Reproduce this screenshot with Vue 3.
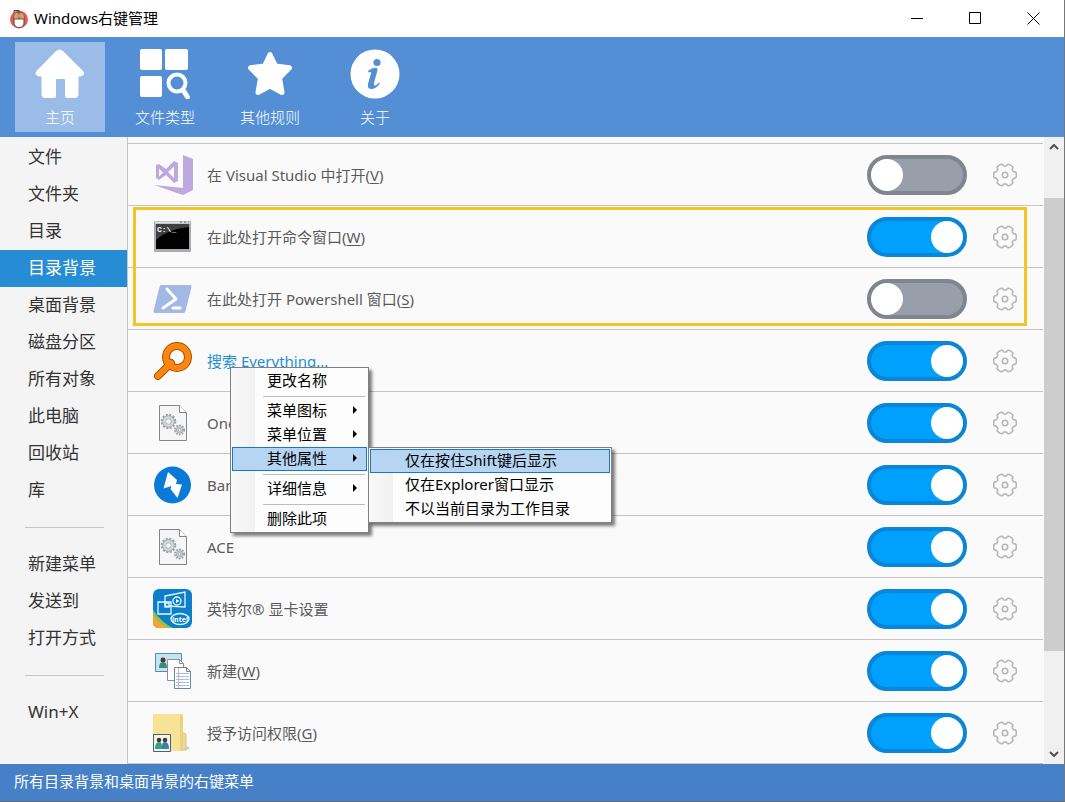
<template>
  <div class="window">
    <header class="title-bar">
      <svg class="app-logo" viewBox="0 0 20 20" width="20" height="20">
        <circle cx="10" cy="10.500" r="9" fill="#ea5a50" />
        <path d="M5 4V1.500h5V4" fill="none" stroke="#444" stroke-width="1" />
        <rect x="5" y="3.500" width="10" height="15" rx="4.500" fill="#fff" stroke="#45484c" stroke-width="1" />
        <path d="M5.500 10V7q0-3 3-3h3q3 0 3 3v3z" fill="#e8a35c" />
        <path d="M5 10h10M10 3.500V10" stroke="#4b6356" stroke-width="1" />
        <rect x="9" y="5" width="2" height="3.500" rx="1" fill="#f7e27a" stroke="#555" stroke-width=".6" />
      </svg>
      <h1 class="title">Windows右键管理</h1>
      <div class="window-buttons">
        <button class="window-btn" aria-label="最小化">
          <svg viewBox="0 0 13 13" width="13" height="13"><path d="M0 6.500h12" /></svg>
        </button>
        <button class="window-btn" aria-label="最大化">
          <svg viewBox="0 0 13 13" width="13" height="13"><path d="M.5.5h11v11H.5z" /></svg>
        </button>
        <button class="window-btn" aria-label="关闭">
          <svg viewBox="0 0 13 13" width="13" height="13"><path d="M.5.5l12 12M12.500.5l-12 12" /></svg>
        </button>
      </div>
    </header>

    <nav class="toolbar">
      <button
        v-for="tab in tabs"
        :key="tab.name"
        class="tab"
        :class="{ active: tab.name === activeTab }"
        @click="activeTab = tab.name"
      >
        <svg class="tab-icon" viewBox="0 0 50 50" width="50" height="50" fill="#fff">
          <path
            v-if="tab.name === 'home'"
            d="M21 2q3.500-3 7 0l20 20q2 2.500 0 4.500-1 1-4.500 1V45q0 4-4 4h-7.500q-2 0-2-2V31q0-1-1-1h-7q-1 0-1 1v16q0 2-2 2h-8.500q-4 0-4-4V27.500q-4 0-5-1-2-2 0-4.500z"
          />
          <template v-else-if="tab.name === 'type'">
            <rect x="0" y="0" width="22" height="21" rx="2" />
            <rect x="25" y="0" width="23" height="21" rx="2" />
            <rect x="0" y="27" width="22" height="21" rx="2" />
            <circle cx="37" cy="34" r="8.500" fill="none" stroke="#fff" stroke-width="4" />
            <path d="M43 41l4.500 7" stroke="#fff" stroke-width="5" stroke-linecap="round" />
          </template>
          <path
            v-else-if="tab.name === 'rule'"
            d="M25 5.500l5.500 11.500 14 1.800L34.500 29l2.500 14.500L25 37l-12 6.500L15.500 29 5.500 18.800l14-1.800z"
            stroke="#fff"
            stroke-width="5"
            stroke-linejoin="round"
          />
          <template v-else>
            <circle cx="25" cy="25" r="24.500" />
            <circle cx="27" cy="13.500" r="3.600" fill="#548fd6" />
            <path
              d="M18 22q5-4 9-3 1 1 0 4l-3 11q-.5 3 1 2.500 2-.5 4-3l1 1q-4 5-8 5.500-5 .5-4-5l3-10.500q.5-2-1-1.500l-1.500.5z"
              fill="#548fd6"
            />
          </template>
        </svg>
        <span>{{ tab.label }}</span>
      </button>
    </nav>

    <div class="body">
      <aside class="sidebar">
        <template v-for="(group, index) in groups" :key="index">
          <hr v-if="index > 0" class="divider" />
          <button
            v-for="item in group"
            :key="item"
            class="side-item"
            :class="{ active: item === activeItem }"
            @click="activeItem = item"
          >
            {{ item }}
          </button>
        </template>
      </aside>

      <main class="content">
        <ul class="list">
          <li v-for="row in rows" :key="row.id" class="row">
            <svg class="row-icon" viewBox="0 0 40 40" width="40" height="40">
              <g v-if="row.icon === 'vs'" fill="#bda9df">
                <path d="M30 0l10 4v31l-10 5L1 30l29 3z" />
                <path
                  fill-rule="evenodd"
                  d="M3 10l3-1 7 5 8-8 4 2v18l-4 2-8-8-7 5-3-2zM6 13.500v8l4-4zM21 11.500l-6 5.500 6 6z"
                />
              </g>
              <g v-else-if="row.icon === 'cmd'">
                <rect x="1" y="4" width="37" height="31" rx="1" fill="#a9acaf" />
                <path d="M2 5.500h35" stroke="#dfe2e5" stroke-width="2" />
                <path d="M27 5h2M31 5h2M35 5h1" stroke="#55595c" stroke-width="1" />
                <rect x="3" y="7" width="33" height="25" fill="#000" />
                <path d="M3 7h33v3Q14 12 3 23z" fill="#3d3f41" />
                <text x="4" y="15" class="cmd-text">C:\_</text>
              </g>
              <g v-else-if="row.icon === 'ps'">
                <path d="M8 6h29q2 0 1.500 2l-6 24q-.5 2-2 2H2q-2 0-1.500-2l6-24Q7 6 8 6z" fill="#a2b9e6" />
                <path d="M14 10l9 10L10 29M20 29h7" class="ps-mark" />
              </g>
              <g v-else-if="row.icon === 'search'">
                <path d="M18 22L5 35" stroke="#a35113" stroke-width="8" stroke-linecap="round" />
                <circle cx="24" cy="16" r="11" fill="none" stroke="#a35113" stroke-width="8" />
                <path d="M18 22L5 35" stroke="#ff850b" stroke-width="6" stroke-linecap="round" />
                <circle cx="24" cy="16" r="11" fill="none" stroke="#ff850b" stroke-width="6" />
              </g>
              <g v-else-if="row.icon === 'file'" fill="none">
                <path d="M6.500 2.500h20l7 7v28h-27z" fill="#f6f6f6" stroke="#858585" />
                <path d="M26.500 2.500v7h7" fill="#fff" stroke="#858585" />
                <circle cx="15.500" cy="18.500" r="6.500" stroke="#9ba1a5" stroke-width="2.500" stroke-dasharray="2 1.400" />
                <circle cx="15.500" cy="18.500" r="4.500" stroke="#d3d8db" stroke-width="3" />
                <circle cx="15.500" cy="18.500" r="5.800" stroke="#9aa0a4" stroke-width=".8" />
                <circle cx="15.500" cy="18.500" r="2.800" fill="#f6f6f6" stroke="#9aa0a4" stroke-width=".8" />
                <circle cx="26.500" cy="27" r="4.500" stroke="#9ba1a5" stroke-width="2" stroke-dasharray="1.700 1.200" />
                <circle cx="26.500" cy="27" r="3.200" fill="#d3d8db" stroke="#9aa0a4" stroke-width=".8" />
                <circle cx="26.500" cy="27" r="1.500" fill="#f6f6f6" stroke="#9aa0a4" stroke-width=".8" />
              </g>
              <g v-else-if="row.icon === 'bandizip'">
                <circle cx="19.500" cy="20" r="18.500" fill="#0a7ad8" />
                <path d="M15 7l9 8-1 4 6 .5-4.500 13.500-7-9 1-3-8 2.500z" fill="#fff" />
              </g>
              <g v-else-if="row.icon === 'intel'">
                <rect x="0" y="0" width="39" height="39" rx="6" fill="#0b7fc9" />
                <path d="M0 21q8 12 20 18H6q-6 0-6-6z" fill="#8fc24a" />
                <path d="M0 26q7 9 15 13H6q-6 0-6-6z" fill="#f0a43a" />
                <g fill="none" stroke="#e9f7ff" stroke-width="1.300">
                  <path d="M12 7l20-4v15l-20-1zM5 13h13v12H5z" />
                  <circle cx="24" cy="12" r="4" />
                  <path d="M12 14h4v4h-4z" />
                  <ellipse cx="27" cy="30" rx="9" ry="5.500" />
                </g>
                <path d="M23 10l3.500 2-3.500 2z" fill="#fff" />
                <text x="27" y="33" class="intel-text">intel</text>
              </g>
              <g v-else-if="row.icon === 'new'">
                <path d="M2.500 2.500h26v18h-26z" fill="#c4e3f5" stroke="#5f87a8" />
                <circle cx="10" cy="9" r="2.500" fill="#4d3a2a" />
                <path d="M6 17q0-6 4-6t4 6z" fill="#3b8a72" />
                <path d="M14.500 8.500h12l4 4v17h-16z" fill="#fdfdfe" stroke="#8a8f98" />
                <path d="M26.500 8.500v4h4" fill="none" stroke="#8a8f98" />
                <path d="M21.500 16.500h12l4 4v17h-16z" fill="#fff" stroke="#71849a" />
                <path d="M33.500 16.500v4h4" fill="none" stroke="#71849a" />
                <path d="M23 22.500h13M23 25.500h13M23 28.500h13M23 31.500h13M23 34.500h13" stroke="#9cc3ea" />
                <path d="M25.500 17v20" stroke="#e8a5b5" />
              </g>
              <g v-else>
                <path d="M28 20h3q2 0 2 2v12l3 1-3 2h-8z" fill="#efd98a" stroke="#d8bf6c" stroke-width=".8" />
                <path d="M32 32l4 3-5 3z" fill="#c9cdd2" />
                <path d="M0 1h28q2 0 2 2v35H0z" fill="#f7e398" />
                <path d="M27 1h1q2 0 2 2v35h-3z" fill="#ecd27a" />
                <path d="M.5 21.500h17v17H.5z" fill="#eef6f2" stroke="#555f5b" />
                <circle cx="6" cy="27" r="2.300" fill="#4a3727" />
                <circle cx="12" cy="27" r="2.300" fill="#4a3727" />
                <path d="M2 36q0-7 4-7 3 0 3 4v3z" fill="#3f9b86" />
                <path d="M9 36v-3q0-4 3-4 4 0 4 7z" fill="#3a7fae" />
              </g>
            </svg>
            <label class="row-text" :class="{ hot: row.icon === 'search' }" :for="'switch-' + row.id">
              {{ row.text }}<template v-if="row.key">(<u>{{ row.key }}</u>)</template>
            </label>
            <input :id="'switch-' + row.id" v-model="row.on" class="switch" type="checkbox" />
            <button class="gear-btn" aria-label="设置">
              <svg viewBox="0 0 24 24" width="24" height="24" fill="none" stroke="#b7b7b7" stroke-width="1.600">
                <path :d="gearPath" />
                <circle cx="12" cy="12" r="2.700" />
              </svg>
            </button>
          </li>
        </ul>

        <div class="highlight-frame"></div>

        <div class="menu context-menu" role="menu">
          <template v-for="(item, index) in menuItems" :key="index">
            <hr v-if="!item" class="menu-divider" />
            <button v-else class="menu-item" :class="{ active: item.active }" role="menuitem">
              <span>{{ item.text }}</span>
              <svg v-if="item.sub" viewBox="0 0 4 8" width="4" height="8"><path d="M0 0l4 4-4 4z" /></svg>
            </button>
          </template>
        </div>

        <div class="menu sub-menu" role="menu">
          <button
            v-for="(text, index) in subItems"
            :key="text"
            class="menu-item"
            :class="{ active: index === 0 }"
            role="menuitem"
          >
            {{ text }}
          </button>
        </div>
      </main>

      <div class="scrollbar">
        <button class="scroll-btn" aria-label="向上">
          <svg viewBox="0 0 10 6" width="10" height="6"><path d="M1 5l4-4 4 4" /></svg>
        </button>
        <div class="track">
          <div class="thumb"></div>
        </div>
        <button class="scroll-btn" aria-label="向下">
          <svg viewBox="0 0 10 6" width="10" height="6"><path d="M1 1l4 4 4-4" /></svg>
        </button>
      </div>
    </div>

    <footer class="status-bar">所有目录背景和桌面背景的右键菜单</footer>
  </div>
</template>

<script setup>
import { ref } from 'vue'

const tabs = [
  { name: 'home', label: '主页' },
  { name: 'type', label: '文件类型' },
  { name: 'rule', label: '其他规则' },
  { name: 'about', label: '关于' }
]
const activeTab = ref('home')

const groups = [
  ['文件', '文件夹', '目录', '目录背景', '桌面背景', '磁盘分区', '所有对象', '此电脑', '回收站', '库'],
  ['新建菜单', '发送到', '打开方式'],
  ['Win+X']
]
const activeItem = ref('目录背景')

const rows = ref([
  { id: 1, icon: 'vs', text: '在 Visual Studio 中打开', key: 'V', on: false },
  { id: 2, icon: 'cmd', text: '在此处打开命令窗口', key: 'W', on: true },
  { id: 3, icon: 'ps', text: '在此处打开 Powershell 窗口', key: 'S', on: false },
  { id: 4, icon: 'search', text: '搜索 Everything...', on: true },
  { id: 5, icon: 'file', text: 'OneDrive', on: true },
  { id: 6, icon: 'bandizip', text: 'Bandizip', on: true },
  { id: 7, icon: 'file', text: 'ACE', on: true },
  { id: 8, icon: 'intel', text: '英特尔® 显卡设置', on: true },
  { id: 9, icon: 'new', text: '新建', key: 'W', on: true },
  { id: 10, icon: 'share', text: '授予访问权限', key: 'G', on: true }
])

// null 表示分隔线
const menuItems = [
  { text: '更改名称' },
  null,
  { text: '菜单图标', sub: true },
  { text: '菜单位置', sub: true },
  { text: '其他属性', sub: true, active: true },
  null,
  { text: '详细信息', sub: true },
  null,
  { text: '删除此项' }
]

const subItems = ['仅在按住Shift键后显示', '仅在Explorer窗口显示', '不以当前目录为工作目录']

// 六齿圆角齿轮
const buildGear = () => {
  const points = []
  for (let a = 0; a < 360; a += 60) {
    for (const [r, offset] of [[11.8, -16], [11.8, 16], [9, 20], [9, 40]]) {
      const rad = ((a + offset) * Math.PI) / 180
      points.push([12 + r * Math.cos(rad), 12 + r * Math.sin(rad)])
    }
  }
  const mid = (p, q) => `${((p[0] + q[0]) / 2).toFixed(2)} ${((p[1] + q[1]) / 2).toFixed(2)}`
  let d = `M${mid(points[points.length - 1], points[0])}`
  points.forEach((p, i) => {
    d += `Q${p[0].toFixed(2)} ${p[1].toFixed(2)} ${mid(p, points[(i + 1) % points.length])}`
  })
  return d + 'Z'
}
const gearPath = buildGear()
</script>

<style>
body {
  margin: 0;
}
</style>

<style scoped>
.window {
  box-sizing: border-box;
  height: 100vh;
  display: flex;
  flex-direction: column;
  border-right: 1px solid #777;
  border-bottom: 1px solid #666;
  background: #fafafa;
  font-family: "Noto Sans", "Noto Sans CJK SC", sans-serif;
  font-size: 15px;
  line-height: 24px;
  overflow: hidden;
}

button {
  border: none;
  padding: 0;
  background: transparent;
  font: inherit;
  color: inherit;
}

.title-bar {
  height: 37px;
  flex-shrink: 0;
  display: flex;
  align-items: center;
  padding: 0 2px 0 9px;
  box-sizing: border-box;
  background: #fff;
}

.title {
  flex: 1;
  margin: 0 0 0 5px;
  padding-bottom: 2px;
  font-size: 15px;
  font-weight: 400;
  color: #000;
}

.window-buttons {
  display: flex;
}

.window-btn {
  width: 58px;
  height: 36px;
  display: flex;
  align-items: center;
  justify-content: center;
}

.window-btn path {
  fill: none;
  stroke: #000;
}

.toolbar {
  height: 100px;
  box-sizing: border-box;
  flex-shrink: 0;
  display: flex;
  gap: 15px;
  padding: 5px 15px;
  background: #548fd6;
}

.tab {
  width: 90px;
  height: 90px;
  display: flex;
  flex-direction: column;
  align-items: center;
  padding-top: 7px;
  gap: 6px;
  color: #fff;
  font-weight: 300;
}

.tab.active {
  background: #9bbce7;
}

.body {
  flex: 1;
  min-height: 0;
  display: flex;
}

.sidebar {
  width: 127px;
  flex-shrink: 0;
  padding-top: 2px;
  border-right: 1px solid #c3c3c8;
  background: #f4f4f4;
}

.side-item {
  display: block;
  width: 100%;
  height: 37px;
  padding: 0 0 2px 28px;
  font-size: 17px;
  text-align: left;
  color: #333;
}

.side-item.active {
  background: #268dd5;
  color: #fff;
}

.divider {
  height: 1px;
  margin: 18px 23px 18px 25px;
  border: none;
  background: #c4c4c4;
}

.content {
  position: relative;
  flex: 1;
  min-width: 0;
  padding-top: 6px;
}

.list {
  margin: 0 1px 0 0;
  padding: 0;
  list-style: none;
  border-top: 1px solid #c3c3c8;
}

.row {
  height: 61px;
  display: flex;
  align-items: center;
  padding: 0 26px 0 25px;
  border-bottom: 1px solid #c3c3c8;
}

.row-text {
  flex: 1;
  margin-left: 14px;
  color: #5a5a5a;
}

.row-text.hot {
  color: #1e90d8;
}

.row-text u {
  text-underline-offset: 2px;
}

.cmd-text {
  font: bold 8px "Liberation Mono", monospace;
  fill: #fff;
}

.ps-mark {
  fill: none;
  stroke: #fff;
  stroke-width: 3;
  stroke-linecap: round;
  stroke-linejoin: round;
}

.intel-text {
  font: bold 7px "Noto Sans", sans-serif;
  fill: #fff;
  text-anchor: middle;
}

.switch {
  appearance: none;
  box-sizing: border-box;
  width: 100px;
  height: 40px;
  margin: 0 26px 0 0;
  padding: 0;
  display: flex;
  border: 4px solid #80868e;
  border-radius: 20px;
  background: #989fab;
}

.switch::before {
  content: "";
  width: 32px;
  height: 32px;
  border-radius: 50%;
  background: #fff;
}

.switch:checked {
  justify-content: flex-end;
  border-color: #0b85d6;
  background: #00a0ff;
}

.gear-btn {
  display: flex;
}

.highlight-frame {
  position: absolute;
  top: 70px;
  left: 5px;
  right: 17px;
  height: 113px;
  border: 3px solid #f5c524;
  pointer-events: none;
}

.menu {
  position: absolute;
  box-sizing: border-box;
  padding: 1px;
  border: 1px solid #808080;
  background: linear-gradient(to right, #f9f9f9, #f1f1f1 24px, #fdfdfd 24px);
  box-shadow: 3px 3px 3px rgba(0, 0, 0, 0.5);
  color: #000;
}

.context-menu {
  top: 230px;
  left: 102px;
  width: 139px;
}

.sub-menu {
  top: 310px;
  left: 240px;
  width: 244px;
}

.menu-item {
  display: flex;
  align-items: center;
  justify-content: space-between;
  width: 100%;
  height: 24px;
  box-sizing: border-box;
  padding: 0 9px 2px 34px;
  border: 1px solid transparent;
  line-height: 20px;
}

.menu-item.active {
  border-color: #1878c8;
  background: #b5d5f2;
}

.menu-divider {
  height: 1px;
  margin: 3px 2px 2px 31px;
  border: none;
  background: #bdbdbd;
}

.scrollbar {
  width: 20px;
  flex-shrink: 0;
  display: flex;
  flex-direction: column;
  background: #f0f0f0;
}

.scroll-btn {
  height: 20px;
  display: flex;
  align-items: center;
  justify-content: center;
}

.scroll-btn path {
  fill: none;
  stroke: #505050;
  stroke-width: 2;
}

.track {
  flex: 1;
  padding-top: 41px;
}

.thumb {
  height: 83%;
  background: #cdcdcd;
}

.status-bar {
  height: 37px;
  flex-shrink: 0;
  padding-left: 14px;
  background: #4680c7;
  color: #fff;
  line-height: 34px;
}
</style>
